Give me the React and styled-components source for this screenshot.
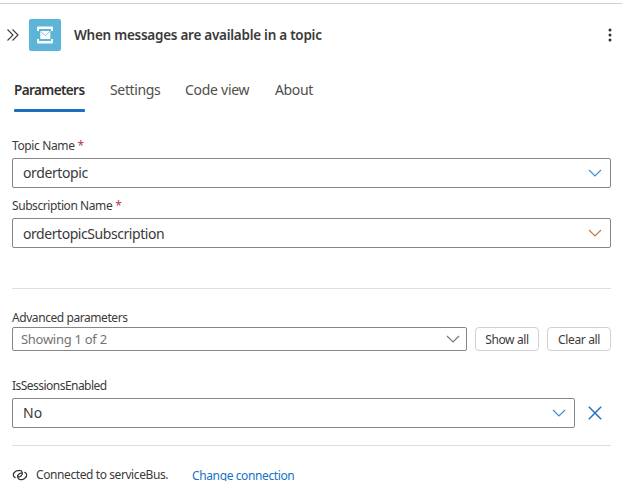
import React from "react";
import styled, { createGlobalStyle } from "styled-components";

const Global = createGlobalStyle`
  * { box-sizing: border-box; }
  html, body { margin: 0; background: #fff; overflow: hidden; }
  body { font-family: "Noto Sans", "Open Sans", sans-serif; color: #3b3a39; }
  button { font: inherit; color: inherit; background: none; border: 0; padding: 0; }
`;

const Panel = styled.main`
  width: 622px;
  height: 481px;
  overflow: hidden;
  background: #fff;
  padding-top: 3px;
`;

const Text = styled.span`
  display: block;
  white-space: nowrap;
  font-size: ${(p) => p.$size || 12}px;
  line-height: ${(p) => p.$line || 16}px;
  font-weight: ${(p) => p.$weight || 400};
  letter-spacing: ${(p) => p.$track || 0}px;
  padding-top: ${(p) => p.$drop || 0}px;
  color: ${(p) => p.$color || "#3b3a39"};
`;

const Header = styled.header`
  border-top: 1px solid #d2d0ce;
  height: 63px;
  padding: 0 6px 0 6px;
  display: flex;
  align-items: center;
`;

const Collapse = styled.button`
  width: 13px;
  height: 14px;
  display: flex;
  margin-right: 10px;
`;

const Brand = styled.div`
  width: 32px;
  height: 32px;
  border-radius: 2px;
  background: #5cb4d9;
  margin-right: 13px;
`;

const More = styled.button`
  width: 12px;
  height: 16px;
  display: flex;
  margin-left: auto;
`;

const Tabs = styled.nav`
  display: flex;
  height: 46px;
  padding: 16px 14px 0;
`;

const Tab = styled.button`
  display: flex;
  align-items: flex-start;
  width: ${(p) => p.$width}px;
  height: 30px;
  margin-right: 25px;
  position: relative;
  &::after {
    content: "";
    position: absolute;
    left: 0;
    right: 0;
    bottom: 0;
    height: 3px;
    border-radius: 1px;
    background: ${(p) => (p.$active ? "#1b6ec2" : "transparent")};
  }
`;

const Body = styled.section`
  padding: 0 11px 0 12px;
`;

const Label = styled.label`
  display: flex;
  gap: 3px;
  height: 16px;
  margin: ${(p) => p.$top}px 0 ${(p) => p.$bottom}px;
`;

const Select = styled.div`
  flex: 1;
  height: ${(p) => (p.$small ? 24 : 30)}px;
  border: 1px solid #868686;
  border-radius: 2px;
  padding: 0 ${(p) => (p.$small ? 6 : 8)}px 0 ${(p) => (p.$small ? 8 : 10)}px;
  display: flex;
  align-items: center;
  justify-content: space-between;
`;

const Row = styled.div`
  display: flex;
  gap: ${(p) => p.$gap || 8}px;
`;

const Button = styled.button`
  width: 64px;
  height: 24px;
  border: 1px solid #d1d1d1;
  border-radius: 4px;
  display: flex;
  align-items: center;
  justify-content: center;
`;

const Clear = styled.button`
  width: 32px;
  height: 30px;
  display: flex;
  align-items: center;
  justify-content: center;
`;

const Divider = styled.hr`
  border: 0;
  height: 1px;
  background: #e1dfdd;
  margin: ${(p) => p.$top}px 0 0;
`;

const Footer = styled.footer`
  display: flex;
  align-items: center;
  height: 16px;
  margin-top: 21px;
`;

const LinkIcon = styled.svg`
  width: 16px;
  height: 12px;
  margin-right: 8px;
`;

const Change = styled.button`
  margin: 2px 0 0 24px;
`;

const Chevron = ({ color }) => (
  <svg width="14" height="8" viewBox="0 0 14 8" fill="none">
    <path d="M1 1 7 7 13 1" stroke={color} strokeWidth="1.15" />
  </svg>
);

const tabs = [
  { name: "Parameters", width: 71, active: true, track: -0.6, size: 13.5 },
  { name: "Settings", width: 50, track: -0.35, size: 14 },
  { name: "Code view", width: 65, track: -0.28, size: 14 },
  { name: "About", width: 39, track: -0.35, size: 14 },
];

export default function App() {
  return (
    <Panel>
      <Global />
      <Header>
        <Collapse aria-label="Collapse">
          <svg width="13" height="14" viewBox="0 0 13 14" fill="none" stroke="#3b3a39" strokeWidth="1.1">
            <path d="M1.5 1.5 7 7 1.5 12.5M6.5 1.5 12 7 6.5 12.5" />
          </svg>
        </Collapse>
        <Brand>
          <svg width="32" height="32" viewBox="0 0 32 32">
            <path fill="#fff" d="M8 8.5Q8 7.5 9 7.5h14q1 0 1 1V12h-2v-2H10v2H8zM8 20h2v2h12v-2h2v3.5q0 1-1 1H9q-1 0-1-1z" />
            <path fill="#fff" d="M11.3 12h10v8h-10z" />
            <path d="M11.6 12.3 16.3 16.6 21 12.3" fill="none" stroke="#5cb4d9" strokeWidth=".8" />
          </svg>
        </Brand>
        <Text $size={13.5} $weight={600} $track={-0.26}>When messages are available in a topic</Text>
        <More aria-label="More">
          <svg width="12" height="16" viewBox="0 0 12 16" fill="#323130">
            <circle cx="6" cy="3" r="1.5" />
            <circle cx="6" cy="8" r="1.5" />
            <circle cx="6" cy="13" r="1.5" />
          </svg>
        </More>
      </Header>
      <Tabs>
        {tabs.map((t) => (
          <Tab key={t.name} $width={t.width} $active={t.active}>
            <Text $size={t.size} $weight={t.active ? 600 : 400} $track={t.track} $color={t.active ? "#323130" : "#504e4c"}>{t.name}</Text>
          </Tab>
        ))}
      </Tabs>
      <Body>
        <Label $top={26} $bottom={4}>
          <Text $track={-0.37}>Topic Name</Text>
          <Text $color="#b83a42">*</Text>
        </Label>
        <Row>
          <Select>
            <Text $size={14} $track={-0.4}>ordertopic</Text>
            <Chevron color="#3f8bd0" />
          </Select>
        </Row>
        <Label $top={10} $bottom={4}>
          <Text $track={-0.42}>Subscription Name</Text>
          <Text $color="#b83a42">*</Text>
        </Label>
        <Row>
          <Select>
            <Text $size={14} $track={-0.44} $drop={2}>ordertopicSubscription</Text>
            <Chevron color="#c07840" />
          </Select>
        </Row>
        <Divider $top={40} />
        <Label $top={21} $bottom={1}>
          <Text $track={-0.43}>Advanced parameters</Text>
        </Label>
        <Row>
          <Select $small>
            <Text $size={13} $track={-0.28} $color="#757371">Showing 1 of 2</Text>
            <Chevron color="#7a7876" />
          </Select>
          <Button><Text $track={-0.35} $drop={2}>Show all</Text></Button>
          <Button><Text $track={-0.35} $drop={2}>Clear all</Text></Button>
        </Row>
        <Label $top={27} $bottom={4}>
          <Text $track={-0.53}>IsSessionsEnabled</Text>
        </Label>
        <Row $gap={4}>
          <Select>
            <Text $size={14}>No</Text>
            <Chevron color="#3f8bd0" />
          </Select>
          <Clear aria-label="Clear">
            <svg width="14" height="14" viewBox="0 0 14 14" stroke="#1b6ec2" strokeWidth="1.4">
              <path d="M.8.8 13.2 13.2M13.2.8.8 13.2" />
            </svg>
          </Clear>
        </Row>
        <Divider $top={17} />
        <Footer>
          <LinkIcon viewBox="0 0 16 12" fill="none" stroke="#323130" strokeWidth="1.25" strokeLinecap="round">
            <path d="M3.2 8.6A3.1 3.1 0 0 1 2.8 3.1L4.2 2.1Q5 1.5 6 1.5H7.4A2.9 2.9 0 0 1 9.3 6.7L8.2 7.6Q7.3 8.2 6.2 7.8" />
            <path d="M12.8 3.4A3.1 3.1 0 0 1 13.2 8.9L11.8 9.9Q11 10.5 10 10.5H8.6A2.9 2.9 0 0 1 6.7 5.3L7.8 4.4Q8.7 3.8 9.8 4.2" />
          </LinkIcon>
          <Text $track={-0.41} $line={12}>Connected to serviceBus.</Text>
          <Change><Text $track={-0.39} $line={10} $color="#1472c8">Change connection</Text></Change>
        </Footer>
      </Body>
    </Panel>
  );
}
